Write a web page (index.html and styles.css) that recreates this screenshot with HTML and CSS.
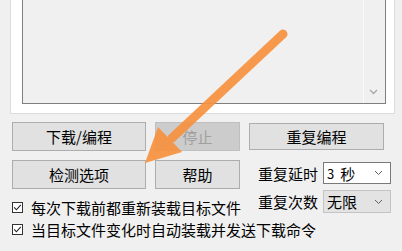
FILE: index.html
```html
<!DOCTYPE html>
<html lang="zh-CN">
<head>
    <meta charset="UTF-8">
    <title>下载/编程</title>
    <link rel="stylesheet" href="styles.css">
</head>
<body>
    <div class="panel">
        <div class="log-box">
            <div class="log-area"></div>
            <div class="scrollbar">
                <svg class="chev" width="9" height="6" viewBox="0 0 9 6"><polyline points="1,1 4.5,4.5 8,1" fill="none" stroke="#a6a6a6" stroke-width="1.3"/></svg>
            </div>
        </div>
    </div>

    <div class="controls">
        <div class="left-col">
            <div class="btn-row">
                <button class="btn wide">下载/编程</button>
                <button class="btn narrow" disabled>停止</button>
            </div>
            <div class="btn-row second">
                <button class="btn wide">检测选项</button>
                <button class="btn narrow">帮助</button>
            </div>
            <label class="check first">
                <svg width="11" height="11" viewBox="0 0 11 11"><rect x="0.5" y="0.5" width="10" height="10" fill="#fff" stroke="#333"/><polyline points="2.2,5.4 4.4,7.8 8.8,2.8" fill="none" stroke="#222" stroke-width="1.1"/></svg>
                <span>每次下载前都重新装载目标文件</span>
            </label>
            <label class="check">
                <svg width="11" height="11" viewBox="0 0 11 11"><rect x="0.5" y="0.5" width="10" height="10" fill="#fff" stroke="#333"/><polyline points="2.2,5.4 4.4,7.8 8.8,2.8" fill="none" stroke="#222" stroke-width="1.1"/></svg>
                <span>当目标文件变化时自动装载并发送下载命令</span>
            </label>
        </div>

        <div class="right-col">
            <button class="btn repeat">重复编程</button>
            <div class="field delay">
                <span class="field-label">重复延时</span>
                <div class="combo white">
                    <span class="num">3</span><span class="unit">秒</span>
                    <svg width="9" height="6" viewBox="0 0 9 6"><polyline points="1,1 4.5,4.5 8,1" fill="none" stroke="#606060" stroke-width="1"/></svg>
                </div>
            </div>
            <div class="field count">
                <span class="field-label">重复次数</span>
                <div class="combo grey">
                    <span>无限</span>
                    <svg width="9" height="6" viewBox="0 0 9 6"><polyline points="1,1 4.5,4.5 8,1" fill="none" stroke="#606060" stroke-width="1"/></svg>
                </div>
            </div>
        </div>
    </div>

    <!-- highlight arrow drawn over the window -->
    <svg class="arrow" width="402" height="251" viewBox="0 0 402 251">
        <g opacity="0.92">
            <line x1="283" y1="34" x2="172" y2="138" stroke="#f7923f" stroke-width="9" stroke-linecap="round"/>
            <polygon points="145,163 158,127 182,152" fill="#f7923f"/>
        </g>
    </svg>
</body>
</html>
```

FILE: styles.css
```css
:root {
    --bg: #f0f0f0;
    --btn-bg: #e1e1e1;
    --btn-border: #adadad;
    --text: #000;
}

body {
    margin: 0;
    width: 402px;
    height: 251px;
    overflow: hidden;
    position: relative;
    background: var(--bg);
    font-family: "Noto Sans CJK SC", "Noto Sans", sans-serif;
    font-size: 15px;
    color: var(--text);
}

/* top output area */
.panel {
    margin-left: 10px;
    width: 385px;
    height: 114px;
    box-sizing: border-box;
    background: #fff;
    border: 1px solid #dcdcdc;
    border-top: none;
    padding: 0 8px 9px 11px;
}

.log-box {
    display: flex;
    height: 104px;
    box-sizing: border-box;
    border: 1px solid #7f7f7f;
    border-top: none;
    background: var(--bg);
}

.log-area {
    flex: 1;
}

.scrollbar {
    width: 22px;
    border-left: 1px solid #fafafa;
    display: flex;
    align-items: flex-end;
    justify-content: center;
    padding-bottom: 8px;
    box-sizing: border-box;
}

.chev {
    margin-right: 3px;
}

/* buttons and options */
.controls {
    display: flex;
    padding-left: 12px;
}

.left-col {
    width: 228px;
}

.btn-row {
    display: flex;
    gap: 9px;
    margin-top: 8px;
}

.btn-row.second {
    margin-top: 9px;
}

.btn {
    height: 29px;
    box-sizing: border-box;
    background: var(--btn-bg);
    border: 1px solid var(--btn-border);
    font-family: inherit;
    font-size: 15px;
    line-height: 1;
    color: var(--text);
    padding: 0;
}

.btn.wide {
    width: 134px;
}

.btn.narrow {
    width: 85px;
}

.btn:disabled {
    background: #cccccc;
    border-color: #bfbfbf;
    color: #a0a0a0;
}

.check {
    display: flex;
    align-items: center;
    height: 22px;
    white-space: nowrap;
}

.check.first {
    margin-top: 7px;
}

.check svg {
    flex: none;
    margin-right: 8px;
}

.right-col {
    margin-left: 9px;
    width: 145px;
}

.btn.repeat {
    width: 135px;
    height: 27px;
    margin-top: 9px;
}

.field {
    display: flex;
    align-items: center;
    padding-left: 9px;
    gap: 5px;
}

.field.delay {
    margin-top: 12px;
}

.field.count {
    margin-top: 6px;
}

.field-label {
    width: 60px;
    white-space: nowrap;
}

.combo {
    width: 68px;
    height: 22px;
    box-sizing: border-box;
    display: flex;
    align-items: center;
    padding: 0 7px 0 3px;
}

.combo svg {
    margin-left: auto;
}

.combo .num {
    font-size: 13px;
}

.combo .unit {
    margin-left: 6px;
}

.combo.white {
    background: #fff;
    border: 1px solid #7a7a7a;
}

.combo.grey {
    height: 23px;
    background: #e3e3e3;
    border: 1px solid #c4c4c4;
}

.arrow {
    position: absolute;
    left: 0;
    top: 0;
    pointer-events: none;
}
```
